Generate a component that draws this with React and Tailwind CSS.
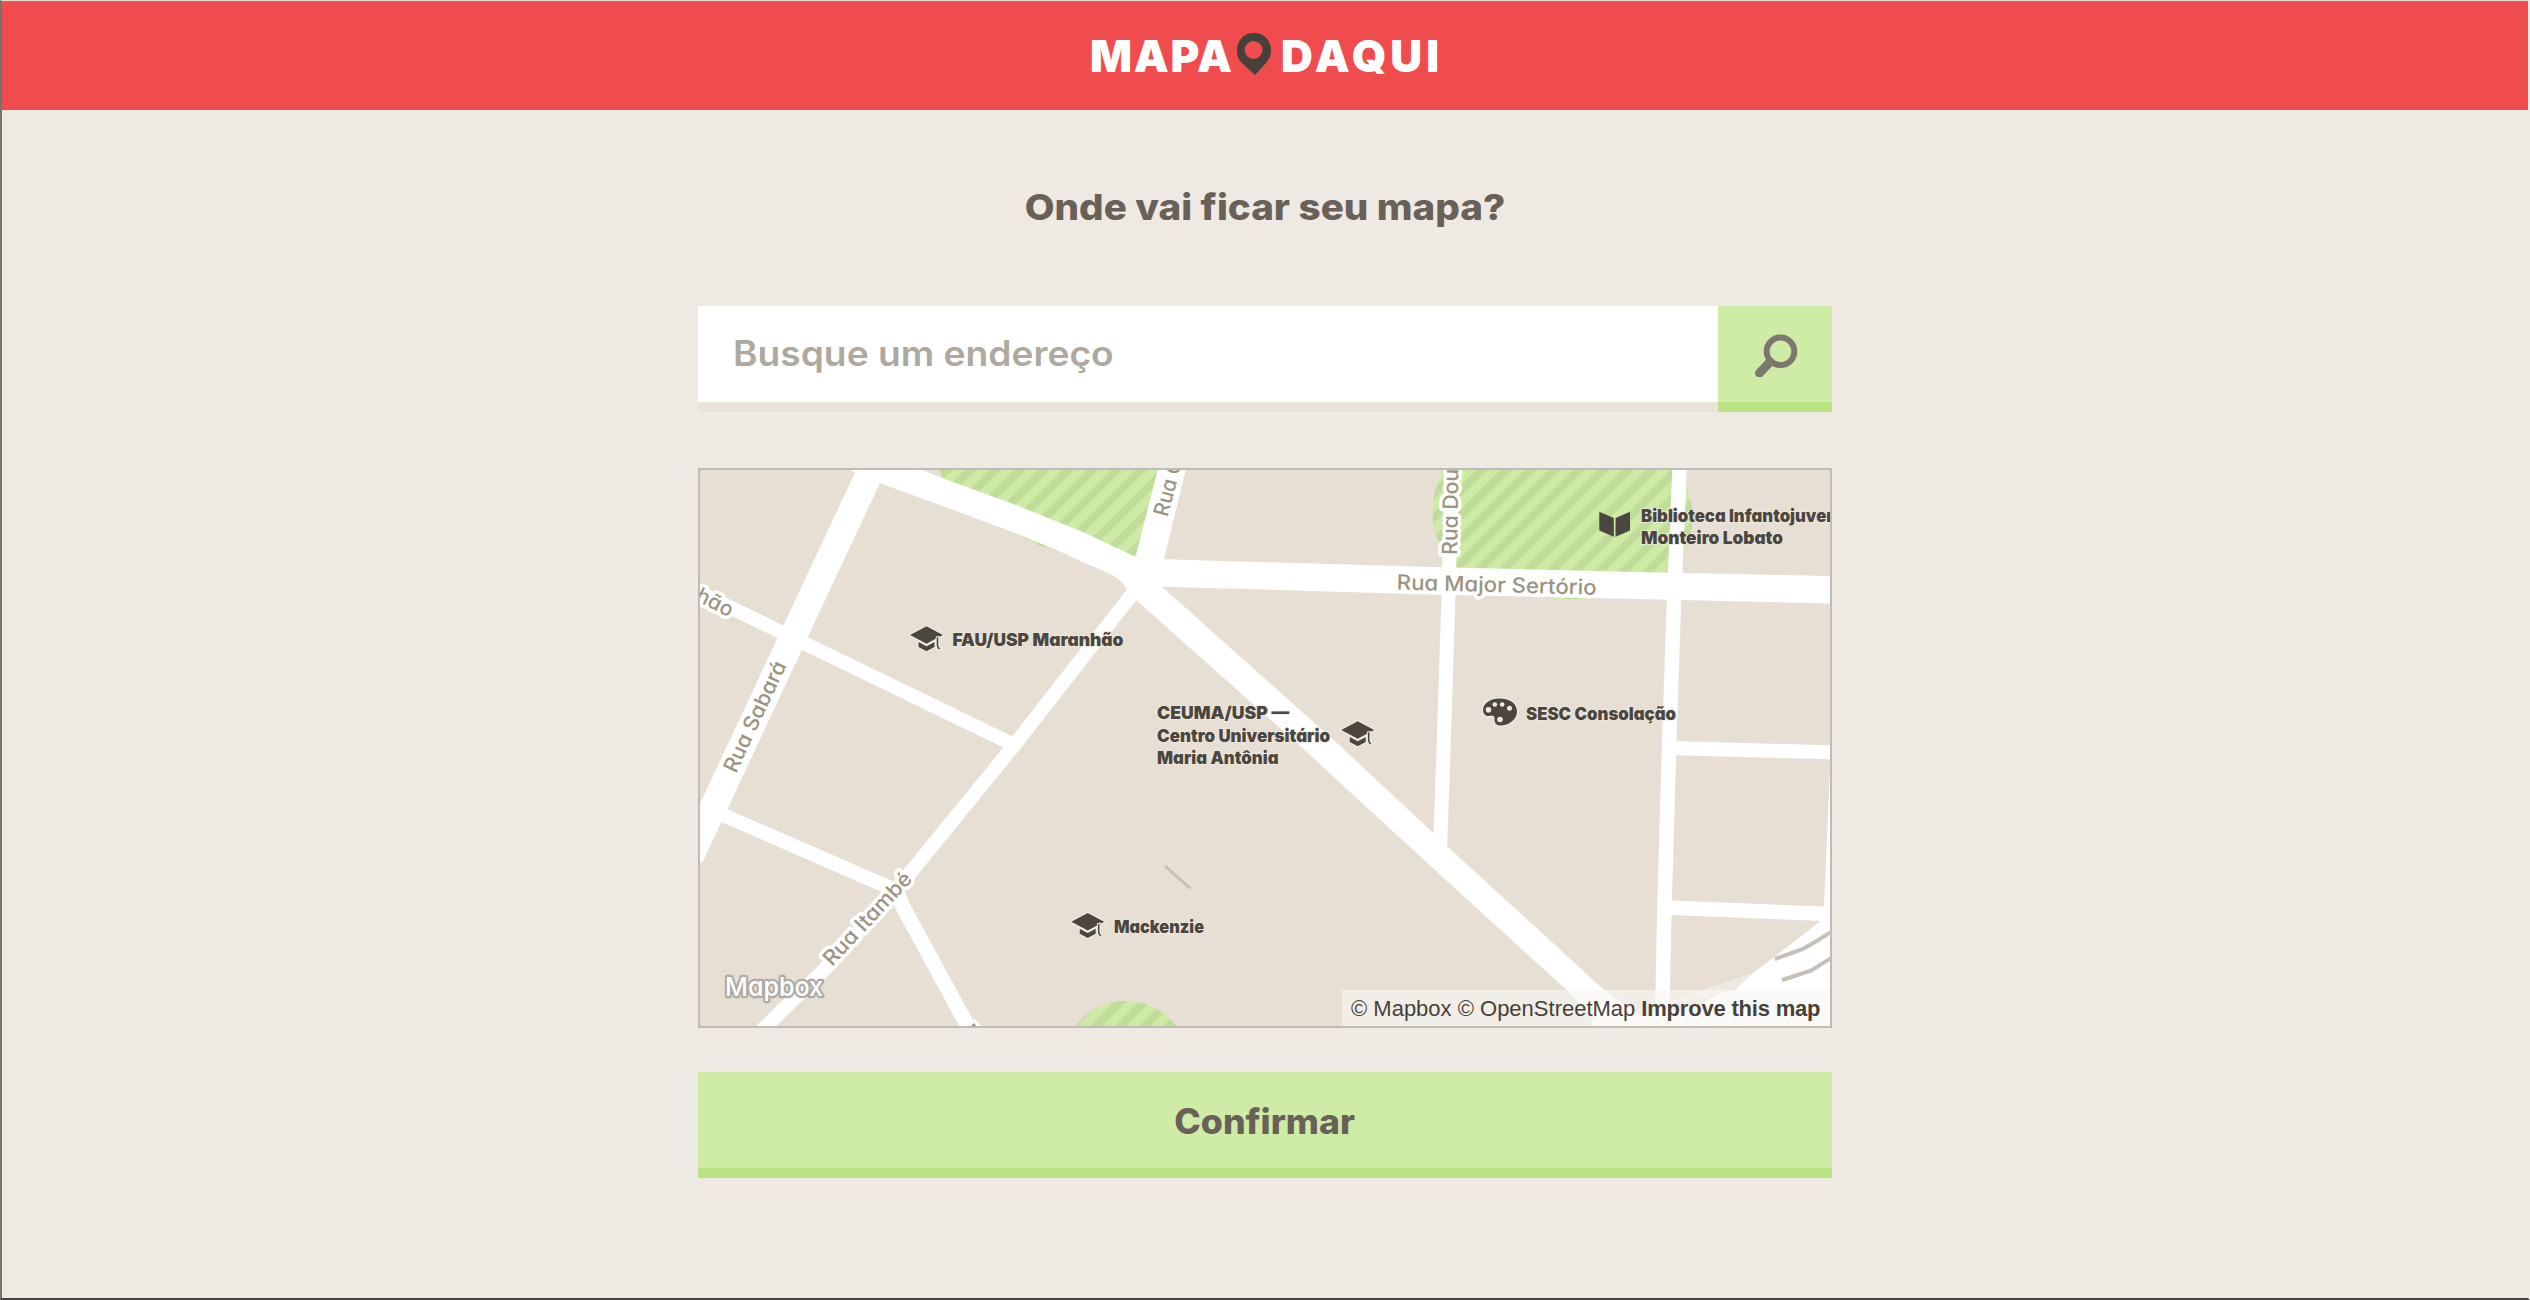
import React from 'react';

const ROADS = [
  ['M880 451 L690 857', 27],
  ['M690 588 L780 631.5 L1010 743', 14],
  ['M723 815 L895 890', 14],
  ['M1140 584 L1016 743 L897 889 L826 968 L760 1032', 14],
  ['M895 888 L903 907 L971 1032', 15],
  ['M1452 460 L1448.5 595 L1443.5 750 L1440 850', 14],
  ['M1680 460 L1674 600 L1669 750 L1664.5 905 L1662 1030', 14.5],
  ['M1669 748 L1832 752.3', 14],
  ['M1664 907.5 L1832 914', 14.5],
];

const STREETS = [
  { t: 'Rua Major Sertório', x: 1396.5, y: 589.5, a: 1.5, len: 200 },
  { t: 'Rua Dou', x: 1457, y: 555, a: -89, len: 86 },
  { t: 'Rua C', x: 1167.5, y: 517.5, a: -75, len: 58 },
  { t: 'Rua Sabará', x: 736, y: 774, a: -65, len: 120 },
  { t: 'Rua Itambé', x: 832, y: 967, a: -47, len: 119 },
];

const PLACES = [
  { t: 'FAU/USP Maranhão', x: 952.5, y: 646.3, len: 171 },
  { t: 'CEUMA/USP —', x: 1157, y: 719.3, len: 132 },
  { t: 'Centro Universitário', x: 1157, y: 741.5, len: 173 },
  { t: 'Maria Antônia', x: 1157, y: 764.3, len: 121.5 },
  { t: 'Mackenzie', x: 1114, y: 932.5, len: 90 },
  { t: 'SESC Consolação', x: 1526, y: 720, len: 150 },
  { t: 'Biblioteca Infantojuvenil', x: 1641, y: 521.7, len: 206 },
  { t: 'Monteiro Lobato', x: 1641, y: 544.3, len: 142 },
];

function Cap({ x, y }) {
  return (
    <g transform={`translate(${x} ${y})`} fill="#4b463f" stroke="#f3efe9" strokeWidth="2" paintOrder="stroke">
      <path d="M-16.5 0 L0 -8.7 L16.5 0 L0 8.7 Z" />
      <path d="M-8 7 L0 11.2 L8 7 V12 L0 16.3 L-8 12 Z" />
      <path d="M10.2 2.5 L11.8 2 V11 L14 14.5 L11.5 13.8 L10.2 11 Z" />
    </g>
  );
}

function MapView() {
  return (
    <svg viewBox="700 470 1130 556" className="block h-[556px] w-[1130px]">
      <defs>
        <pattern id="grass" width="17.2" height="17.2" patternUnits="userSpaceOnUse" patternTransform="rotate(45)">
          <rect width="17.2" height="17.2" fill="#cdeba5" />
          <rect width="8" height="17.2" fill="#bfdd98" />
        </pattern>
      </defs>
      <rect x="700" y="470" width="1130" height="556" fill="#e7dfd4" />
      <g fill="url(#grass)">
        <path d="M938 468 L945 482 L1010 528 Q1035 548 1062 551 L1140 560 Q1176 530 1179 490 L1180 468 Z" />
        <path d="M1443 469 Q1422 515 1443 550 L1450 568 L1543 597 Q1565 601 1590 598 L1668 573 L1683 553 Q1700 520 1687 490 L1683 469 Z" />
        <path d="M1640 540 H1670 V574 H1640 Z" />
        <circle cx="1126" cy="1064" r="63" />
      </g>
      <g fill="#fff">
        <path d="M848 469 L921 469 L940 477.3 L1010 502.7 L1080 530.7 L1135.5 556.7 L1158 469 H1186 L1164 559.3 L1442 567.3 L1668 572.7 L1831 576 V603.4 L1441 594.7 L1162 586.7 L1339 745 L1433 832.7 L1447.7 846.7 L1603 989 L1645 1027 H1603 L1566.7 990 L1460 893 L1299 745 L1137 600.7 L1127 589 Q1120 578 1110 574 L1080 560.7 L1056.7 550 L1010 531 L879 482.7 Z" />
        <path d="M1830 770 L1831 1027 L1590 1027 L1603 989 L1640 1016 L1700 1005 L1753 973 L1773 958 L1810 929.5 L1820 921 L1824 906 Z" />
      </g>
      <path d="M1753 973 L1706 989 L1660 1006 L1735 990 Z" fill="#efe9e2" />
      <g fill="none" stroke="#fff">
        {ROADS.map(([d, w]) => (
          <path key={d} d={d} strokeWidth={w} strokeLinejoin="round" />
        ))}
      </g>
      <g fill="none" stroke="#c5c0b8" strokeWidth="4">
        <path d="M1775 959 L1803 949 L1815 942 L1832 931.5" />
        <path d="M1782 980 L1811 970.7 L1832 957.5" />
        <path d="M1165 866 L1190.5 888.5" strokeWidth="3" />
      </g>

      <g
        className="[font-family:Inter,sans-serif] text-[21px] font-medium"
        fill="#9a9482"
        stroke="#fff"
        strokeWidth="7"
        strokeLinejoin="round"
        paintOrder="stroke"
        style={{ fontFeatureSettings: '"cv11"' }}
      >
        {STREETS.map((s) => (
          <text
            key={s.t}
            transform={`translate(${s.x} ${s.y}) rotate(${s.a})`}
            textLength={s.len}
            lengthAdjust="spacingAndGlyphs"
          >
            {s.t}
          </text>
        ))}
        <text transform="translate(729 617.5) rotate(27)" textAnchor="end">hão</text>
        <path d="M970 1027 L974 1023 L977 1027 Z" />
      </g>

      <g
        className="[font-family:Inter,sans-serif] text-[17.5px] font-black"
        fill="#4b463f"
        stroke="#efeae2"
        strokeWidth="1.5"
        paintOrder="stroke"
        style={{ fontFeatureSettings: '"cv11"' }}
      >
        {PLACES.map((p) => (
          <text key={p.t} x={p.x} y={p.y} textLength={p.len} lengthAdjust="spacingAndGlyphs">
            {p.t}
          </text>
        ))}
      </g>
      <Cap x={926.5} y={635} />
      <Cap x={1357.7} y={730} />
      <Cap x={1087.7} y={921.7} />
      <path d="M1599.3 511.7 L1613.8 518 V536.7 L1599.3 530.5 Z M1630 511.7 L1615.6 518 V536.7 L1630 530.5 Z" fill="#4b463f" />
      <g stroke="#f3efe9" strokeWidth="2" paintOrder="stroke">
        <path
          fill="#4b463f"
          d="M1499 698.5 C1509 698 1517 703 1517 711.5 C1517 720 1508 726 1499.5 725.5 C1495 725 1494 721 1494.5 718 C1494.5 715.5 1492 715.5 1489 716 C1485 716.5 1483 713 1483 710 C1483 703 1491 698.5 1499 698.5 Z"
        />
        <g fill="#efeae2" stroke="none">
          <circle cx="1488.5" cy="709.8" r="2.8" />
          <circle cx="1494.8" cy="704.5" r="2.3" />
          <circle cx="1502.2" cy="704.5" r="2.3" />
          <circle cx="1509.5" cy="708.2" r="2.5" />
          <circle cx="1500" cy="719.5" r="2.8" />
        </g>
      </g>
      <text
        x="725"
        y="996"
        textLength="98"
        lengthAdjust="spacingAndGlyphs"
        className="[font-family:Inter,sans-serif] text-[26px] font-medium"
        fill="#fff"
        stroke="#aeaba4"
        strokeWidth="4.5"
        strokeLinejoin="round"
        paintOrder="stroke"
        style={{ fontFeatureSettings: '"cv11"' }}
      >
        Mapbox
      </text>
    </svg>
  );
}

export default function App() {
  return (
    <div className="flex h-[1300px] w-[2530px] flex-col border-t border-r-2 border-b-2 border-l-2 border-t-[#e3ddd3] border-r-[#efe9e3] border-b-[#45413d] border-l-[#77736c] bg-[#efe9e3] [font-family:Inter,sans-serif]">
      <header className="flex h-[109px] items-center justify-center border-t border-[#8b857d] bg-[#f04c4d]">
        <svg viewBox="1088 20 354 70" className="h-[70px] w-[354px]" role="img" aria-label="Mapa Daqui">
          <g fill="#fff" className="text-[44px] font-black">
            <text x="1090" y="70.5" textLength="142" lengthAdjust="spacing">MAPA</text>
            <text x="1281" y="70.5" textLength="158" lengthAdjust="spacing">DAQUI</text>
          </g>
          <path
            fill="#46413a"
            fillRule="evenodd"
            d="M1254 32 C1264 32 1271 39.5 1271 49 C1271 55 1269 58.5 1266 62 L1255 74 L1242 62 C1238.5 58.5 1237 55 1237 49 C1237 39.5 1244 32 1254 32 Z M1253.5 40 A9 9 0 1 0 1253.5 58 A9 9 0 1 0 1253.5 40 Z"
          />
        </svg>
      </header>
      <main className="mx-auto flex w-[1134px] flex-col">
        <h1 className="mt-[73px] scale-x-[1.072] text-center text-[36px] leading-[48px] font-extrabold text-[#696158]">
          Onde vai ficar seu mapa?
        </h1>
        <div className="mt-[75px] flex h-[106px]">
          <div className="flex flex-1 items-center border-b-[10px] border-[#eae3d8] bg-white pb-0.5 pl-[35px]">
            <span className="origin-left scale-x-[1.062] text-[35px] font-semibold text-[#ada9a0]">Busque um endereço</span>
          </div>
          <button className="flex w-[114px] items-center justify-center border-b-[10px] border-[#bce382] bg-[#ceeca6] pl-0.5">
            <svg viewBox="1753 331 46 46" className="h-[46px] w-[46px]" fill="none" stroke="#7c776f">
              <circle cx="1780.5" cy="351.3" r="13.8" strokeWidth="6" />
              <path d="M1770 362 L1759.5 373" strokeWidth="9" strokeLinecap="round" />
            </svg>
          </button>
        </div>
        <section className="relative mt-14 h-[560px] border-2 border-[#bfbcb6]">
          <MapView />
          <div className="absolute right-0 bottom-0 flex h-9 w-[488px] items-center gap-1.5 bg-[#f8f6f3]/60 pl-[9px] text-[22px] whitespace-nowrap text-[#46413a] [font-family:'Liberation_Sans',sans-serif]">
            <span>© Mapbox © OpenStreetMap</span>
            <b className="tracking-[-0.2px]">Improve this map</b>
          </div>
        </section>
        <button className="mt-11 h-[106px] border-b-[10px] border-[#bce382] bg-[#ceeca6] pt-0.5 text-[35px] text-[#696158]">
          <span className="inline-block scale-x-[1.02] font-extrabold">Confirmar</span>
        </button>
      </main>
    </div>
  );
}
